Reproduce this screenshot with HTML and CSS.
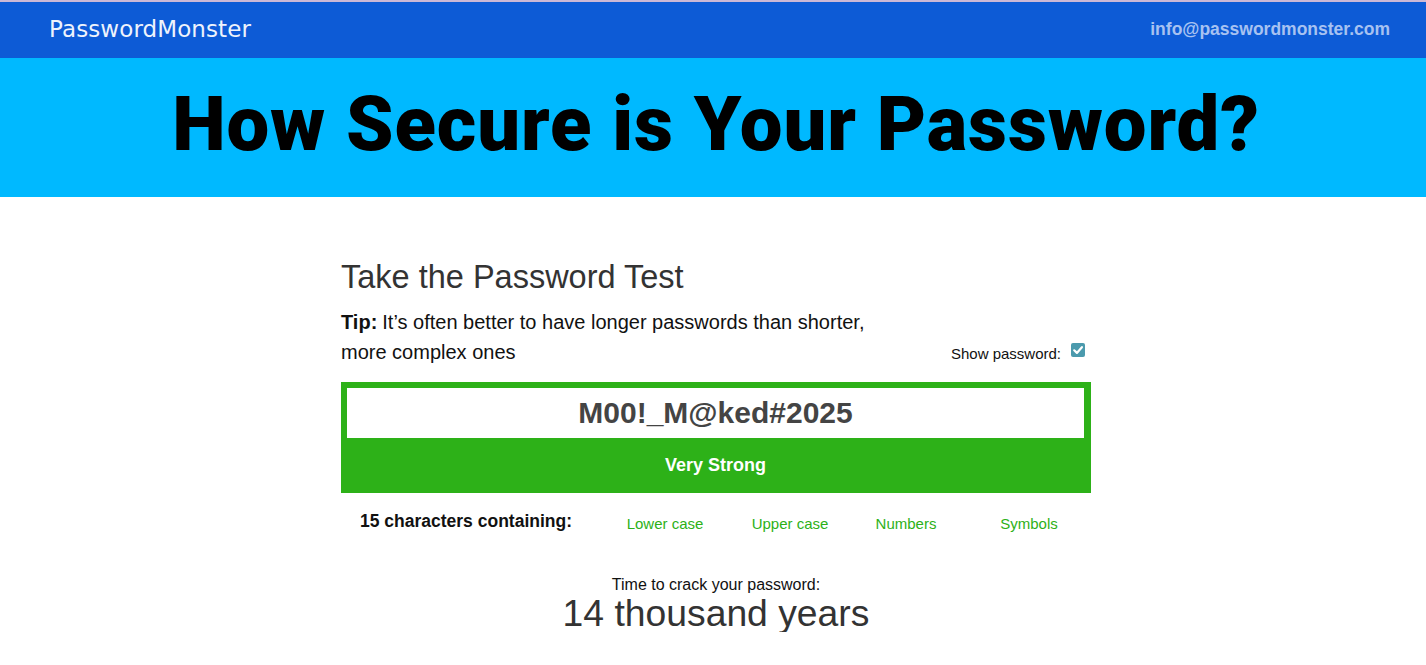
FILE: index.html
```html
<!DOCTYPE html>
<html lang="en">
<head>
<meta charset="utf-8">
<title>PasswordMonster - How Secure is Your Password?</title>
<link rel="stylesheet" href="styles.css">
</head>
<body>
<div class="topline"></div>
<header class="navbar">
  <a class="brand" href="#">PasswordMonster</a>
  <a class="email" href="#">info@passwordmonster.com</a>
</header>
<section class="hero">
  <h1 class="hero-title">How Secure is Your Password?</h1>
</section>
<main class="tester">
  <h2 class="test-title">Take the Password Test</h2>
  <div class="tip-row">
    <div class="tip">
      <div class="tip-line"><strong class="tip-label">Tip:</strong><span class="tip-text">It’s often better to have longer passwords than shorter,</span></div>
      <div class="tip-line">more complex ones</div>
    </div>
    <label class="show">Show password: <span class="check"><svg viewBox="0 0 14 14" width="14" height="14"><rect x="0" y="0" width="14" height="14" rx="2" fill="#4b9aad"/><path d="M3.2 7.3 L5.9 9.9 L10.9 4.2" fill="none" stroke="#fff" stroke-width="2.2" stroke-linecap="round" stroke-linejoin="round"/></svg></span></label>
  </div>
  <div class="meter">
    <div class="pw-input">M00!_M@ked#2025</div>
    <div class="strength">Very Strong</div>
  </div>
  <div class="contains">
    <div class="count">15 characters containing:</div>
    <div class="kind">Lower case</div>
    <div class="kind">Upper case</div>
    <div class="kind">Numbers</div>
    <div class="kind">Symbols</div>
  </div>
  <div class="crack">
    <div class="crack-label">Time to crack your password:</div>
    <div class="crack-time">14 thousand years</div>
  </div>
</main>
</body>
</html>
```

FILE: styles.css
```css
* { box-sizing: border-box; }
html, body { margin: 0; padding: 0; background: #fff; }
body { font-family: "Liberation Sans", Arial, sans-serif; color: #333; }

.topline { height: 2px; background: #cbb8d6; }

.navbar {
  height: 56px;
  background: #0d5bd6;
  display: flex;
  align-items: center;
  justify-content: space-between;
  padding: 0 36px 0 49px;
}
.brand {
  font-family: "DejaVu Sans", sans-serif;
  font-size: 23px;
  color: #eef3fc;
  text-decoration: none;
  letter-spacing: 0.1px;
  margin-top: -3px;
}
.email {
  font-family: "Liberation Sans", Arial, sans-serif;
  font-weight: bold;
  font-size: 17.5px;
  color: #a7c2f1;
  text-decoration: none;
  margin-top: -2px;
}

.hero {
  height: 139px;
  background: #00b9ff;
  display: flex;
  justify-content: center;
  padding-left: 6px;
}
.hero-title {
  margin: 0;
  padding-top: 21px;
  font-family: "Roboto", "Liberation Sans", sans-serif;
  font-weight: 900;
  font-size: 76px;
  line-height: 90px;
  color: #000;
  letter-spacing: 0.9px;
}

.tester {
  width: 750px;
  margin: 0 auto;
  position: relative;
  left: 3px;
  padding-top: 60px;
}
.test-title {
  margin: 0;
  font-weight: normal;
  font-size: 32.5px;
  line-height: 40px;
  color: #333;
}
.tip-row {
  display: flex;
  justify-content: space-between;
  align-items: flex-end;
  margin-top: 10px;
}
.tip {
  width: 560px;
  font-size: 20px;
  line-height: 30px;
  color: #111;
}
.tip-line { display: flex; gap: 5px; white-space: nowrap; }
.tip-label { font-weight: bold; }
.show {
  font-size: 15px;
  color: #111;
  display: flex;
  align-items: center;
  gap: 10px;
  margin-right: 6px;
  padding-bottom: 5px;
}
.check { display: block; height: 14px; margin-top: -8px; }
.check svg { display: block; }

.meter {
  margin-top: 15px;
  background: #2db118;
  padding: 6px 7px 0 6px;
}
.pw-input {
  background: #fff;
  height: 50px;
  text-align: center;
  font-weight: bold;
  font-size: 30px;
  line-height: 50px;
  color: #444;
}
.strength {
  height: 55px;
  text-align: center;
  color: #fff;
  font-weight: bold;
  font-size: 18px;
  line-height: 55px;
}

.contains {
  display: grid;
  grid-template-columns: 250px 148px 102px 130px 116px;
  align-items: baseline;
  margin-top: 18px;
}
.count {
  text-align: center;
  font-weight: bold;
  font-size: 17.5px;
  color: #111;
}
.kind {
  text-align: center;
  font-size: 15px;
  color: #2db118;
  position: relative;
  top: 2px;
}

.crack {
  text-align: center;
  margin-top: 44px;
}
.crack-label {
  font-size: 16px;
  line-height: 18px;
  color: #111;
}
.crack-time {
  font-size: 37.3px;
  line-height: 38px;
  color: #333;
}
```
